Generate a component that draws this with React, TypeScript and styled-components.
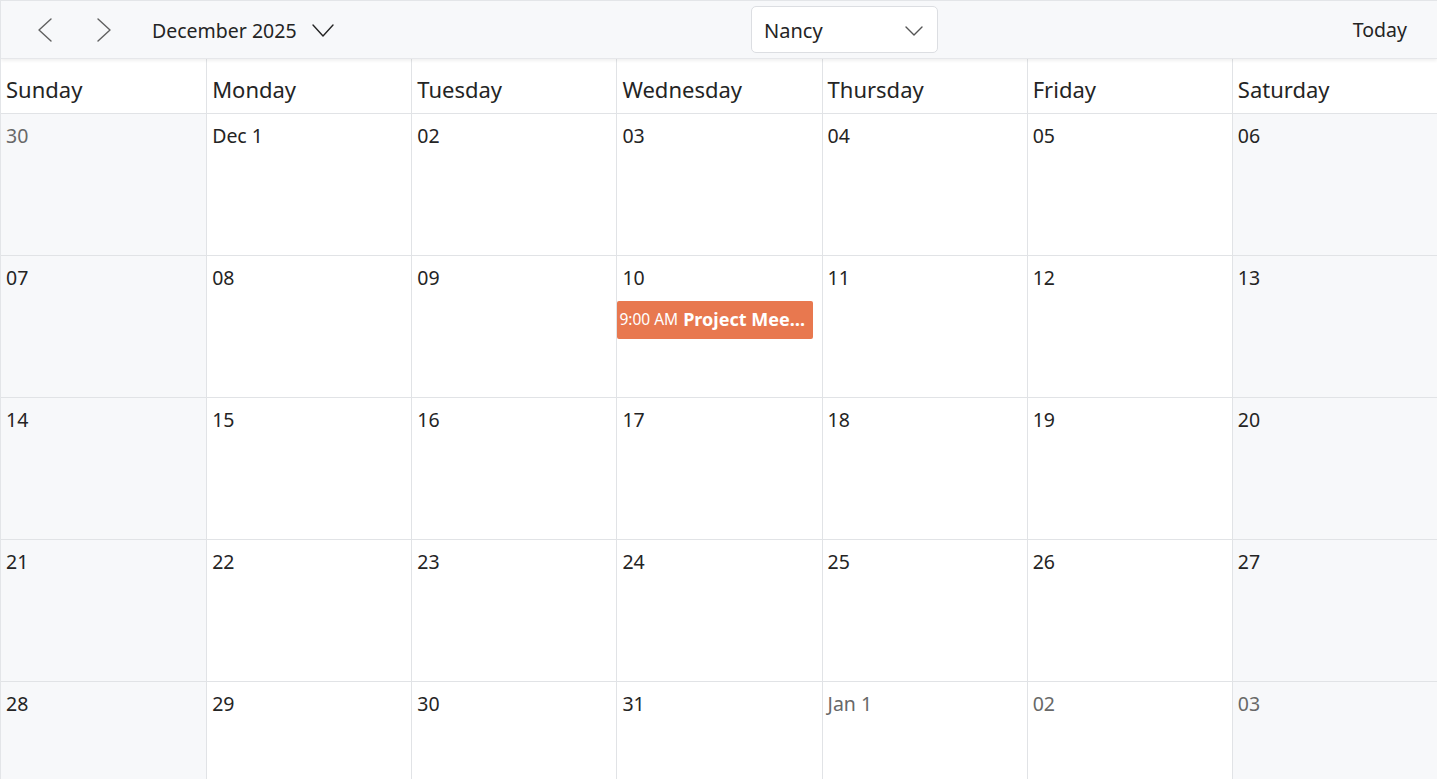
import React from 'react';
import styled, { createGlobalStyle } from 'styled-components';

const GlobalStyle = createGlobalStyle`
  html, body {
    margin: 0;
    padding: 0;
    overflow: hidden;
    background: #ffffff;
  }
  * {
    box-sizing: border-box;
  }
`;

const Wrapper = styled.div`
  width: 1437px;
  height: 779px;
  overflow: hidden;
  font-family: 'Noto Sans', 'Open Sans', sans-serif;
  color: #242424;
  border-left: 1px solid #e3e5e8;
  display: flex;
  flex-direction: column;
`;

const Toolbar = styled.header`
  position: relative;
  z-index: 2;
  height: 59px;
  flex: none;
  display: grid;
  grid-template-columns: 750px 187px 1fr;
  align-items: center;
  background: #f7f8fa;
  border-top: 1px solid #e3e5e8;
  border-bottom: 1px solid #e6e7ea;
  box-shadow: 0 2px 3px rgba(0, 0, 0, 0.06);
`;

const NavGroup = styled.div`
  display: flex;
  align-items: center;
  padding-left: 28px;
  padding-top: 1px;
`;

const NavButton = styled.button`
  border: none;
  background: transparent;
  padding: 0;
  width: 32px;
  height: 36px;
  display: flex;
  align-items: center;
  justify-content: center;
  margin-right: 27px;
  color: #606060;
  cursor: pointer;
`;

const MonthPicker = styled.button`
  border: none;
  background: transparent;
  padding: 0;
  margin-left: 5px;
  display: flex;
  align-items: center;
  gap: 15px;
  font-family: inherit;
  font-size: 19.5px;
  color: #242424;
  cursor: pointer;
`;

const Select = styled.div`
  height: 47px;
  margin-top: 0;
  border: 1px solid #dcdee2;
  border-radius: 5px;
  background: #ffffff;
  display: flex;
  align-items: center;
  justify-content: space-between;
  padding: 2px 14px 0 12px;
  font-size: 20px;
  color: #242424;
`;

const TodayButton = styled.button`
  justify-self: end;
  border: none;
  background: transparent;
  margin-right: 30px;
  padding: 0;
  font-family: inherit;
  font-size: 19.5px;
  color: #242424;
  cursor: pointer;
`;

const Grid = styled.div`
  flex: none;
  display: grid;
  grid-template-columns: repeat(7, minmax(0, 1fr));
  grid-template-rows: 55px repeat(5, 142px);
`;

const DayName = styled.div<{ $first: boolean }>`
  border-left: ${({ $first }) => ($first ? 'none' : '1px solid #e1e3e6')};
  border-bottom: 1px solid #e1e3e6;
  padding: 15px 0 0 5px;
  font-size: 22px;
  color: #242424;
  background: #ffffff;
`;

const Cell = styled.div<{ $first: boolean; $weekend: boolean }>`
  border-left: ${({ $first }) => ($first ? 'none' : '1px solid #e1e3e6')};
  border-bottom: 1px solid #e1e3e6;
  background: ${({ $weekend }) => ($weekend ? '#f7f8fa' : '#ffffff')};
  padding: 9px 0 0 5px;
  display: flex;
  flex-direction: column;
  min-width: 0;
`;

const DateLabel = styled.span<{ $muted: boolean }>`
  font-size: 19.5px;
  line-height: 26px;
  color: ${({ $muted }) => ($muted ? '#686868' : '#242424')};
`;

const Appointment = styled.div`
  margin: 10px 9px 0 -5px;
  height: 38px;
  border-radius: 2px;
  background: #e8784f;
  color: #ffffff;
  display: flex;
  align-items: center;
  gap: 5px;
  padding: 0 4px 2px 2px;
  white-space: nowrap;
  overflow: hidden;
`;

const AppointmentTime = styled.span`
  flex: none;
  font-size: 15.5px;
`;

const AppointmentTitle = styled.span`
  min-width: 0;
  font-size: 18px;
  font-weight: 700;
  overflow: hidden;
  text-overflow: ellipsis;
`;

const Chevron = ({ dir, w, h }: { dir: 'left' | 'right' | 'down'; w: number; h: number }) => {
  const d =
    dir === 'left'
      ? `M${w - 1} 1 L1 ${h / 2} L${w - 1} ${h - 1}`
      : dir === 'right'
      ? `M1 1 L${w - 1} ${h / 2} L1 ${h - 1}`
      : `M1 1 L${w / 2} ${h - 1} L${w - 1} 1`;
  return (
    <svg width={w} height={h} viewBox={`0 0 ${w} ${h}`} fill="none">
      <path d={d} stroke="currentColor" strokeWidth="1.4" strokeLinecap="round" strokeLinejoin="round" />
    </svg>
  );
};

const SelectArrow = styled.span`
  display: flex;
  color: #555555;
`;

const days = ['Sunday', 'Monday', 'Tuesday', 'Wednesday', 'Thursday', 'Friday', 'Saturday'];

type Day = { label: string; muted: boolean };

const buildWeeks = (): Day[][] => {
  const weeks: Day[][] = [];
  const pad = (n: number) => (n < 10 ? `0${n}` : `${n}`);
  const all: Day[] = [{ label: '30', muted: true }];
  for (let d = 1; d <= 31; d++) {
    all.push({ label: d === 1 ? 'Dec 1' : pad(d), muted: false });
  }
  all.push({ label: 'Jan 1', muted: true }, { label: '02', muted: true }, { label: '03', muted: true });
  for (let i = 0; i < all.length; i += 7) weeks.push(all.slice(i, i + 7));
  return weeks;
};

export default function App() {
  const weeks = buildWeeks();
  return (
    <>
      <GlobalStyle />
      <Wrapper>
        <Toolbar>
          <NavGroup>
            <NavButton aria-label="Previous">
              <Chevron dir="left" w={14} h={24} />
            </NavButton>
            <NavButton aria-label="Next">
              <Chevron dir="right" w={14} h={24} />
            </NavButton>
            <MonthPicker>
              December 2025
              <Chevron dir="down" w={22} h={13} />
            </MonthPicker>
          </NavGroup>
          <Select>
            Nancy
            <SelectArrow>
              <Chevron dir="down" w={18} h={10} />
            </SelectArrow>
          </Select>
          <TodayButton>Today</TodayButton>
        </Toolbar>
        <Grid>
          {days.map((name, i) => (
            <DayName key={name} $first={i === 0}>
              {name}
            </DayName>
          ))}
          {weeks.map((week) =>
            week.map((day, i) => (
              <Cell key={day.label + i} $first={i === 0} $weekend={i === 0 || i === 6}>
                <DateLabel $muted={day.muted}>{day.label}</DateLabel>
                {day.label === '10' && (
                  <Appointment>
                    <AppointmentTime>9:00 AM</AppointmentTime>
                    <AppointmentTitle>Project Meeting</AppointmentTitle>
                  </Appointment>
                )}
              </Cell>
            ))
          )}
        </Grid>
      </Wrapper>
    </>
  );
}
